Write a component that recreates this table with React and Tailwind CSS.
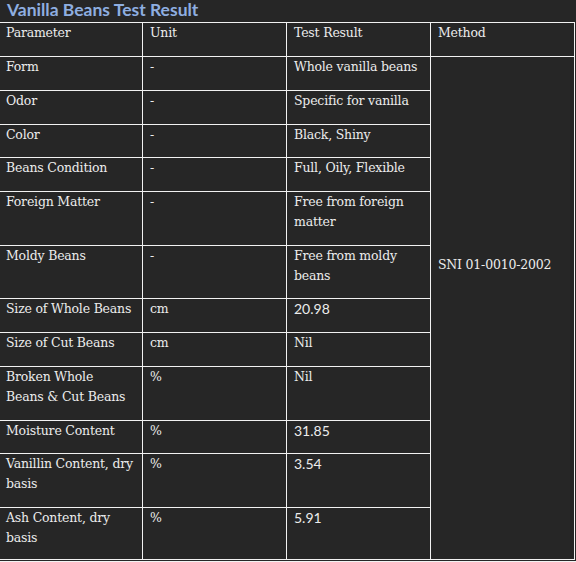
import React from "react";

const serif = "font-['DejaVu_Serif',serif] text-[12.5px] tracking-[-0.2px]";
const sans = "font-['Lato',sans-serif] text-[14px]";

const rows = [
  { p: "Form", u: "-", r: "Whole vanilla beans" },
  { p: "Odor", u: "-", r: "Specific for vanilla" },
  { p: "Color", u: "-", r: "Black, Shiny" },
  { p: "Beans Condition", u: "-", r: "Full, Oily, Flexible" },
  { p: "Foreign Matter", u: "-", r: "Free from foreign matter" },
  { p: "Moldy Beans", u: "-", r: "Free from moldy beans" },
  { p: "Size of Whole Beans", u: "cm", r: "20.98", num: true },
  { p: "Size of Cut Beans", u: "cm", r: "Nil" },
  {
    p: (
      <>
        Broken Whole
        <br />
        Beans &amp; Cut Beans
      </>
    ),
    u: "%",
    r: "Nil",
  },
  { p: "Moisture Content", u: "%", r: "31.85", num: true },
  { p: "Vanillin Content, dry basis", u: "%", r: "3.54", num: true },
  { p: "Ash Content, dry basis", u: "%", r: "5.91", num: true },
];

const Cell = ({ children, className = "" }) => (
  <div className={`bg-[#262626] pl-[7px] leading-[20px] ${className}`}>
    {children}
  </div>
);

const App = () => {
  return (
    <div className="w-[576px] h-[562px] bg-[#262626] text-[#ececec] overflow-hidden">
      <div className="h-[22px] pl-[7px] font-['Lato',sans-serif] font-bold text-[17.5px] leading-[20px] text-[#8eaee0]">
        Vanilla Beans Test Result
      </div>
      <div className="-ml-[2px] w-[577px] grid grid-cols-[143px_143px_143px_143px] grid-rows-[33px_33px_33px_32px_33px_53px_52px_33px_33px_53px_32px_53px_51px] gap-px p-px bg-[#f2f2f2]">
        <Cell className={serif}>Parameter</Cell>
        <Cell className={serif}>Unit</Cell>
        <Cell className={serif}>Test Result</Cell>
        <Cell className={serif}>Method</Cell>
        {rows.map((row, i) => (
          <React.Fragment key={i}>
            <Cell className={serif}>{row.p}</Cell>
            <Cell className={serif}>{row.u}</Cell>
            <Cell className={row.num ? sans : serif}>{row.r}</Cell>
            {i === 0 && (
              <Cell className={`${serif} row-span-12 pt-[198px]`}>
                SNI 01-0010-2002
              </Cell>
            )}
          </React.Fragment>
        ))}
      </div>
      <div className="mt-px h-px bg-[#f2f2f2]" />
    </div>
  );
};

export default App;
